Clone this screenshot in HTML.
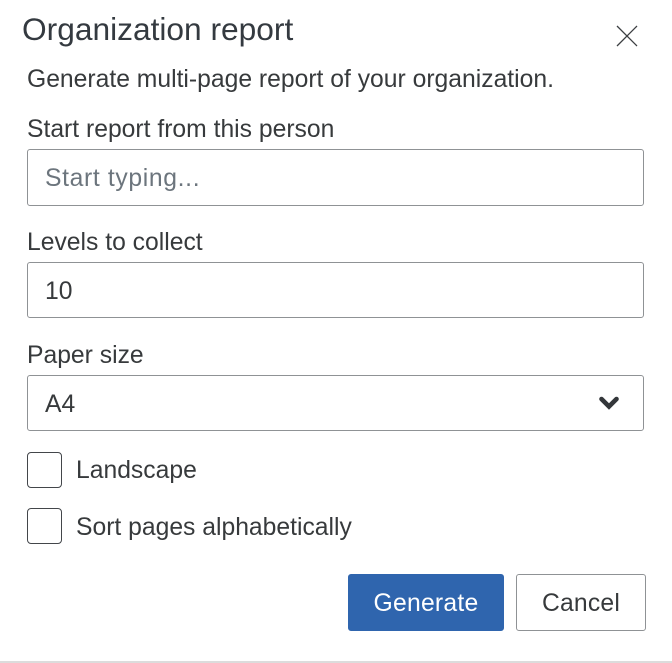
<!DOCTYPE html>
<html>
<head>
<meta charset="utf-8">
<style>
html,body{margin:0;padding:0;background:#fff;}
body{width:672px;height:663px;position:relative;overflow:hidden;font-family:"Liberation Sans",sans-serif;color:#373a3c;}
.t{position:absolute;white-space:nowrap;font-size:24.7px;line-height:30px;color:#373a3c;}
.box{position:absolute;box-sizing:border-box;background:#fff;border:1px solid #8f9295;border-radius:3px;}
.cb{position:absolute;box-sizing:border-box;left:27px;width:35px;height:36px;background:#fff;border:1px solid #43464a;border-radius:4px;}
</style>
</head>
<body>
<div class="t" style="left:22px;top:12px;font-size:31.7px;line-height:34px;color:#343a40;">Organization report</div>
<svg style="position:absolute;left:612px;top:21px" width="30" height="30" viewBox="0 0 30 30"><path d="M5 5L25 25M25 5L5 25" stroke="#3c3f42" stroke-width="1.3" fill="none"/></svg>
<div class="t" style="left:27px;top:65px;">Generate multi-page report of your organization.</div>
<div class="t" style="left:27px;top:115px;">Start report from this person</div>
<div class="box" style="left:27px;top:149px;width:617px;height:57px;"></div>
<div class="t" style="left:45px;top:164px;color:#6c757d;letter-spacing:0.65px;">Start typing...</div>
<div class="t" style="left:27px;top:228px;">Levels to collect</div>
<div class="box" style="left:27px;top:262px;width:617px;height:56px;"></div>
<div class="t" style="left:45px;top:277px;">10</div>
<div class="t" style="left:27px;top:341px;">Paper size</div>
<div class="box" style="left:27px;top:375px;width:617px;height:56px;"></div>
<div class="t" style="left:45px;top:390px;">A4</div>
<svg style="position:absolute;left:596px;top:392px" width="26" height="20" viewBox="0 0 26 20"><path d="M5.5 7L13 14.5L20.5 7" stroke="#33363a" stroke-width="4.6" stroke-linecap="round" stroke-linejoin="miter" fill="none"/></svg>
<div class="cb" style="top:452px;"></div>
<div class="t" style="left:76px;top:456px;">Landscape</div>
<div class="cb" style="top:508px;"></div>
<div class="t" style="left:76px;top:513px;">Sort pages alphabetically</div>
<div class="box" style="left:348px;top:574px;width:156px;height:57px;background:#2f65ae;border-color:#2f65ae;"></div>
<div class="t" style="left:348px;width:156px;text-align:center;top:589px;color:#fff;letter-spacing:0.25px;">Generate</div>
<div class="box" style="left:516px;top:574px;width:130px;height:57px;"></div>
<div class="t" style="left:516px;width:130px;text-align:center;top:589px;letter-spacing:0.2px;">Cancel</div>
<div style="position:absolute;left:0;top:661px;width:672px;height:2px;background:#dcdcdc;"></div>
</body>
</html>
